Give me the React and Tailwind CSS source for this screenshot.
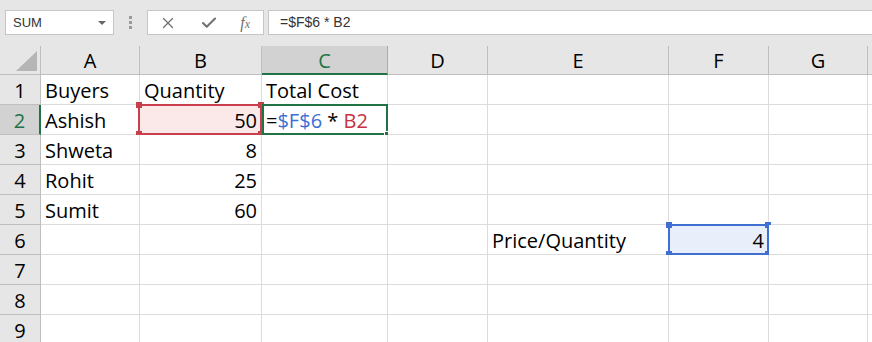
import { X, Check } from "lucide-react";

const cols = [
    { key: "A", w: "w-[99px]" },
    { key: "B", w: "w-[122px]" },
    { key: "C", w: "w-[126px]" },
    { key: "D", w: "w-[100px]" },
    { key: "E", w: "w-[181px]" },
    { key: "F", w: "w-[100px]" },
    { key: "G", w: "w-[99px]" },
];

const data = {
    1: { A: "Buyers", B: "Quantity", C: "Total Cost" },
    2: { A: "Ashish", B: 50 },
    3: { A: "Shweta", B: 8 },
    4: { A: "Rohit", B: 25 },
    5: { A: "Sumit", B: 60 },
    6: { E: "Price/Quantity", F: 4 },
};

const rows = [1, 2, 3, 4, 5, 6, 7, 8, 9];

const Handle = ({ pos, color }) => (
    <span className={`absolute w-[6px] h-[6px] ${color} ${pos}`} />
);

const Formula = () => (
    <span>
        <span className="text-black">=</span>
        <span className="text-[#3c6fd4]">$F$6</span>
        <span className="text-black"> * </span>
        <span className="text-[#c8323f]">B2</span>
    </span>
);

const Cell = ({ row, col }) => {
    const value = data[row]?.[col.key];
    const isNum = typeof value === "number";
    const isRef = row === 2 && col.key === "B";
    const isEdit = row === 2 && col.key === "C";
    const isPrice = row === 6 && col.key === "F";

    let bg = "bg-white";
    if (isRef) bg = "bg-[#fbe8e9]";
    if (isPrice) bg = "bg-[#e9effa]";

    return (
        <div
            className={`relative h-[30px] shrink-0 ${col.w} ${bg} border-r border-b border-[#dcdcdc] flex items-center pt-[2px] px-[4px] ${isNum ? "justify-end" : "justify-start"}`}
        >
            {isEdit ? <Formula /> : <span className="whitespace-nowrap">{value}</span>}

            {isRef && (
                <div className="absolute -left-[2px] -top-px -right-px -bottom-px border-2 border-[#c8404b] pointer-events-none">
                    <Handle pos="-left-[4px] -top-[4px]" color="bg-[#c8404b]" />
                    <Handle pos="-right-[4px] -top-[4px]" color="bg-[#c8404b]" />
                    <Handle pos="-left-[4px] -bottom-[4px]" color="bg-[#c8404b]" />
                    <Handle pos="-right-[4px] -bottom-[4px]" color="bg-[#c8404b]" />
                </div>
            )}
            {isEdit && (
                <div className="absolute left-0 -top-px -right-px -bottom-px border-2 border-[#217346] pointer-events-none">
                    <span className="absolute -right-[4px] -bottom-[4px] w-[6px] h-[6px] bg-[#217346] border border-white" />
                </div>
            )}
            {isPrice && (
                <div className="absolute -left-px -top-px -right-px -bottom-px border-2 border-[#3f6fd1] pointer-events-none">
                    <Handle pos="-left-[4px] -top-[4px]" color="bg-[#3f6fd1]" />
                    <Handle pos="-right-[4px] -top-[4px]" color="bg-[#3f6fd1]" />
                    <Handle pos="-left-[4px] -bottom-[4px]" color="bg-[#3f6fd1]" />
                    <Handle pos="-right-[4px] -bottom-[4px]" color="bg-[#3f6fd1]" />
                </div>
            )}
        </div>
    );
};

const App = () => {
    return (
        <div className="w-[872px] h-[342px] overflow-hidden bg-white text-[20px] text-black font-['Open_Sans',sans-serif]">
            {/* formula bar */}
            <div className="h-[46px] bg-[#e6e6e6] flex items-start pt-[10px] pl-[5px] gap-0">
                <div className="w-[109px] h-[25px] bg-white border border-[#c6c6c6] flex items-center justify-between pl-[7px] pr-[7px] text-[13px] text-[#333] font-['Liberation_Sans',sans-serif]">
                    <span>SUM</span>
                    <span className="w-0 h-0 border-l-[4px] border-r-[4px] border-t-[4px] border-l-transparent border-r-transparent border-t-[#666]" />
                </div>
                <div className="w-[33px] h-[25px] flex flex-col items-center justify-center gap-[2px]">
                    <span className="w-[3px] h-[3px] bg-[#9a9a9a]" />
                    <span className="w-[3px] h-[3px] bg-[#9a9a9a]" />
                    <span className="w-[3px] h-[3px] bg-[#9a9a9a]" />
                </div>
                <div className="w-[117px] h-[25px] bg-white border border-[#c6c6c6] flex items-center justify-between px-[11px] text-[#707070]">
                    <X size={18} strokeWidth={1.7} />
                    <Check size={18} strokeWidth={2.8} />
                    <span className="italic text-[16px] font-['Liberation_Serif',serif] leading-none pr-[2px]">
                        f<span className="text-[12px]">x</span>
                    </span>
                </div>
                <div className="ml-[4px] flex-1 h-[25px] bg-white border border-[#c6c6c6] border-r-0 flex items-center pl-[11px] text-[14px] text-[#333] font-['Liberation_Sans',sans-serif]">
                    =$F$6 * B2
                </div>
            </div>

            {/* column headers */}
            <div className="flex h-[29px]">
                <div className="relative w-[41px] shrink-0 bg-[#e6e6e6] border-r border-b border-[#bfbfbf]">
                    <svg className="absolute right-[3px] bottom-[3px]" width="21" height="20" viewBox="0 0 21 20">
                        <polygon points="21,0 21,20 0,20" fill="#b5b5b5" />
                    </svg>
                </div>
                {cols.map((c) => (
                    <div
                        key={c.key}
                        className={`shrink-0 ${c.w} flex items-center justify-center pt-[2px] border-r ${c.key === "C" ? "bg-[#d2d2d2] text-[#217346] border-b-2 border-b-[#217346] border-r-[#ababab]" : "bg-[#e6e6e6] border-b border-[#bfbfbf]"}`}
                    >
                        {c.key}
                    </div>
                ))}
                <div className="flex-1 bg-[#e6e6e6] border-b border-[#bfbfbf]" />
            </div>

            {/* rows */}
            {rows.map((r) => (
                <div key={r} className="flex">
                    <div
                        className={`w-[41px] h-[30px] shrink-0 flex items-center justify-center pt-[2px] border-b border-[#bfbfbf] ${r === 2 ? "bg-[#d2d2d2] text-[#217346] border-r-2 border-r-[#217346]" : "bg-[#e6e6e6] border-r border-r-[#bfbfbf]"}`}
                    >
                        {r}
                    </div>
                    {cols.map((c) => (
                        <Cell key={c.key} row={r} col={c} />
                    ))}
                    <div className="flex-1 h-[30px] border-b border-[#dcdcdc]" />
                </div>
            ))}
        </div>
    );
};

export default App;
